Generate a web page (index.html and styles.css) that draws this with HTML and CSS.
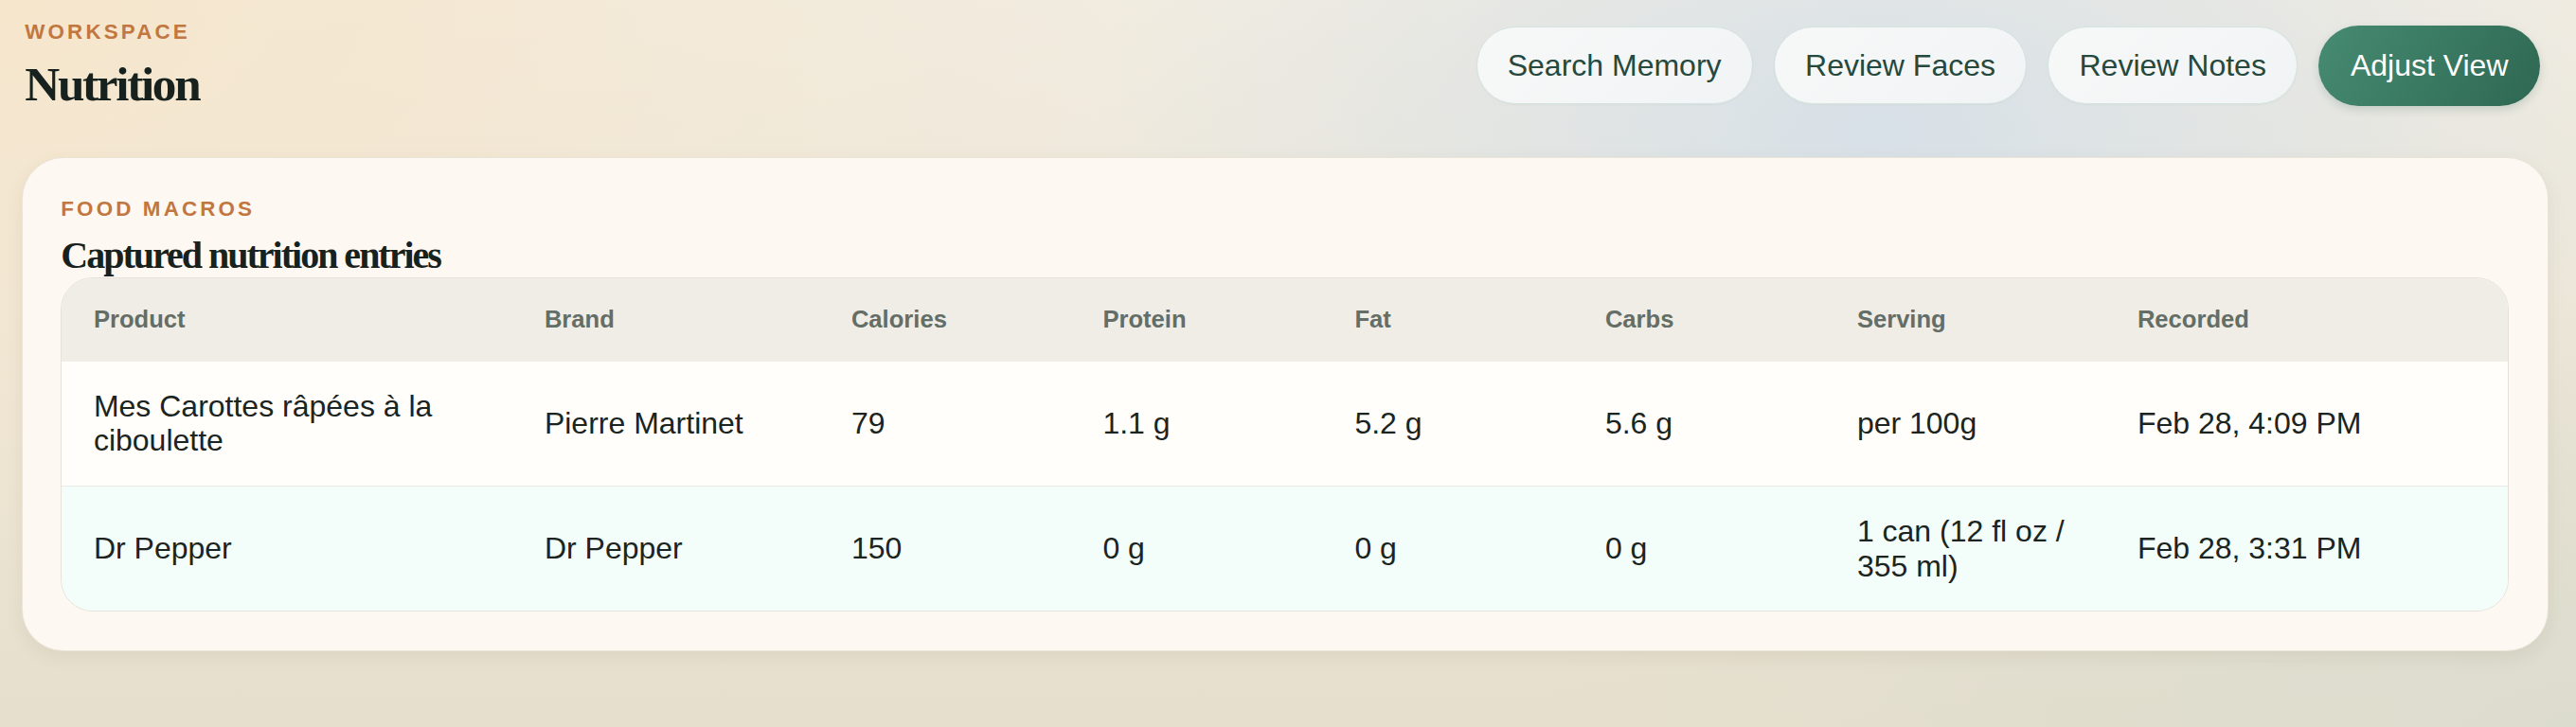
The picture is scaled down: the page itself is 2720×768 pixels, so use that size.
FILE: index.html
```html
<!DOCTYPE html>
<html lang="en">
<head>
<meta charset="utf-8">
<title>Nutrition</title>
<link rel="stylesheet" href="styles.css">
</head>
<body>
<div class="page">
  <header class="topbar">
    <div class="titles">
      <div class="eyebrow">WORKSPACE</div>
      <h1 class="page-title">Nutrition</h1>
    </div>
    <nav class="actions">
      <button class="btn">Search Memory</button>
      <button class="btn">Review Faces</button>
      <button class="btn">Review Notes</button>
      <button class="btn btn-primary">Adjust View</button>
    </nav>
  </header>

  <section class="card">
    <div class="eyebrow">FOOD MACROS</div>
    <h2 class="card-title">Captured nutrition entries</h2>
    <div class="table-wrap">
      <table class="macros">
        <colgroup>
          <col class="c-product">
          <col class="c-brand">
          <col class="c-num">
          <col class="c-num2">
          <col class="c-num3">
          <col class="c-num2">
          <col class="c-serving">
          <col class="c-recorded">
        </colgroup>
        <thead>
          <tr>
            <th>Product</th>
            <th>Brand</th>
            <th>Calories</th>
            <th>Protein</th>
            <th>Fat</th>
            <th>Carbs</th>
            <th>Serving</th>
            <th>Recorded</th>
          </tr>
        </thead>
        <tbody>
          <tr>
            <td>Mes Carottes râpées à la ciboulette</td>
            <td>Pierre Martinet</td>
            <td>79</td>
            <td>1.1 g</td>
            <td>5.2 g</td>
            <td>5.6 g</td>
            <td>per 100g</td>
            <td>Feb 28, 4:09 PM</td>
          </tr>
          <tr class="alt">
            <td>Dr Pepper</td>
            <td>Dr Pepper</td>
            <td>150</td>
            <td>0 g</td>
            <td>0 g</td>
            <td>0 g</td>
            <td>1 can (12 fl oz / 355 ml)</td>
            <td>Feb 28, 3:31 PM</td>
          </tr>
        </tbody>
      </table>
    </div>
  </section>
</div>
</body>
</html>
```

FILE: styles.css
```css
* { box-sizing: border-box; }

html, body {
  margin: 0;
  padding: 0;
  min-height: 100%;
}

body {
  min-height: 768px;
  font-family: "Liberation Sans", Arial, sans-serif;
  color: #1b2420;
  background:
    radial-gradient(ellipse 30% 55% at 73% 18%, rgba(214, 224, 232, 0.95), rgba(214, 224, 232, 0) 100%),
    radial-gradient(ellipse 45% 90% at 0% 0%, rgba(246, 230, 204, 1), rgba(246, 230, 204, 0) 100%),
    radial-gradient(ellipse 40% 60% at 100% 100%, rgba(220, 220, 206, 1), rgba(220, 220, 206, 0) 100%),
    linear-gradient(180deg, #f1ece1 0%, #e6dfcd 100%);
}

.page {
  padding: 20.8px 29px 40px 22.7px;
}

.topbar {
  display: flex;
  align-items: center;
  justify-content: space-between;
  padding: 0 9px 0 3.6px;
  margin-bottom: 48.6px;
}

.titles {
  display: flex;
  flex-direction: column;
}

.eyebrow {
  font-family: "Liberation Sans", Arial, sans-serif;
  font-weight: 700;
  font-size: 22.4px;
  line-height: 25px;
  letter-spacing: 0.14em;
  color: #c1773f;
}

.page-title {
  margin: 15.2px 0 0 0;
  font-family: "Liberation Serif", "Times New Roman", serif;
  font-weight: 700;
  font-size: 51.2px;
  line-height: 56.7px;
  letter-spacing: -0.045em;
  color: #17221e;
}

.actions {
  display: flex;
  align-items: center;
  gap: 22.5px;
}

.btn {
  font-family: "Liberation Sans", Arial, sans-serif;
  font-size: 32px;
  line-height: 36.8px;
  padding: 21.6px 32px;
  border-radius: 999px;
  border: 1px solid #d4e3de;
  background: linear-gradient(135deg, #f7f8f8, #f1f4f5);
  color: #25493e;
  white-space: nowrap;
  box-shadow: 0 1px 2px rgba(40, 70, 60, 0.04);
}

.btn-primary {
  padding: 24px 33.5px;
  border: none;
  color: #ffffff;
  background: linear-gradient(120deg, #468b72 0%, #3a7a62 50%, #2f6753 100%);
  box-shadow: 0 4px 10px rgba(40, 90, 70, 0.18);
}

.card {
  background: #fdf9f2;
  border: 1px solid rgba(200, 190, 170, 0.35);
  border-radius: 44px;
  padding: 40.6px;
  box-shadow: 0 6px 18px rgba(90, 75, 45, 0.08);
}

.card-title {
  margin: 15.6px 0 0 0;
  font-family: "Liberation Serif", "Times New Roman", serif;
  font-weight: 700;
  font-size: 40px;
  line-height: 44.3px;
  letter-spacing: -0.05em;
  color: #17221e;
}

.table-wrap {
  border: 1px solid #e6e2d9;
  border-radius: 34px;
  overflow: hidden;
  background: #fffefb;
}

.macros {
  width: 100%;
  border-collapse: collapse;
  table-layout: fixed;
}

.c-product { width: 476px; }
.c-brand { width: 324px; }
.c-num { width: 265.5px; }
.c-num2 { width: 266px; }
.c-num3 { width: 264.5px; }
.c-serving { width: 296px; }
.c-recorded { width: auto; }

.macros th {
  background: #f0ede6;
  text-align: left;
  font-weight: 700;
  font-size: 25.6px;
  line-height: 29.4px;
  color: #646e66;
  padding: 29.3px 33.6px;
}

.macros td {
  font-size: 32px;
  line-height: 36.8px;
  color: #1b2420;
  padding: 28.8px 33.6px;
  vertical-align: middle;
}

.macros tbody tr {
  background: #fffefb;
}

.macros tbody tr.alt {
  background: #f3fdf9;
  border-top: 1px solid #e5ece8;
}
```
